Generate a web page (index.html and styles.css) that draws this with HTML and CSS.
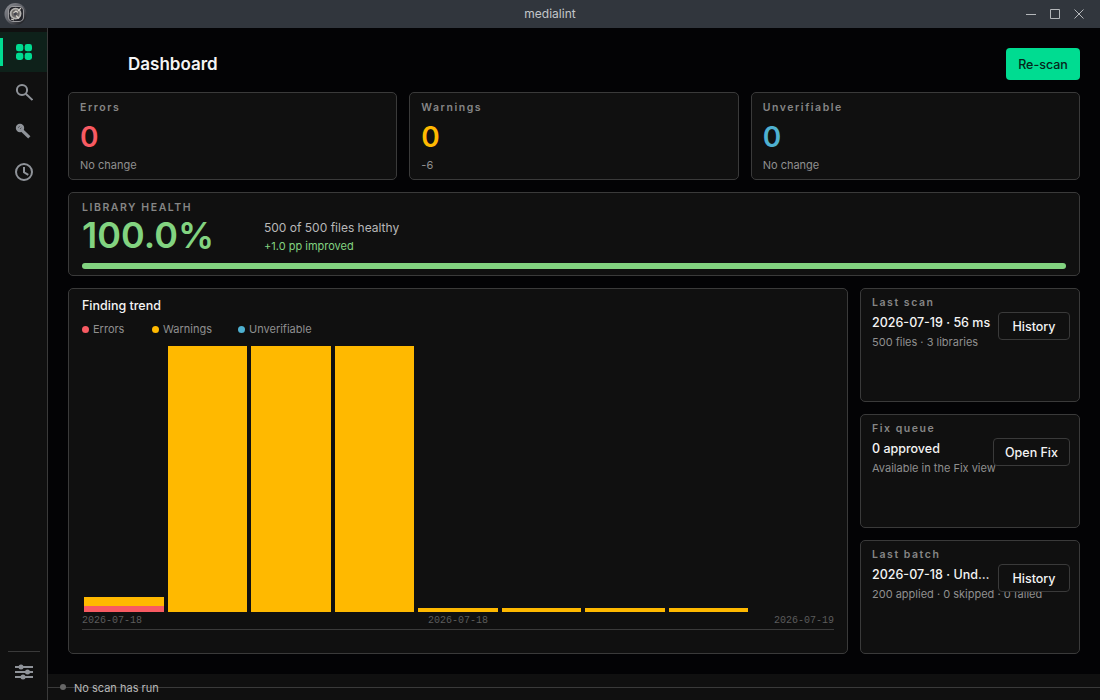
FILE: index.html
```html
<!DOCTYPE html>
<html lang="en">

<head>
    <meta charset="UTF-8">
    <meta name="viewport" content="width=device-width, initial-scale=1.0">
    <title>medialint</title>
    <link rel="stylesheet" href="styles.css">
</head>

<body>
    <!-- Window title bar -->
    <header class="titlebar">
        <svg class="app-icon" width="24" height="24" viewBox="0 0 24 24">
            <defs>
                <linearGradient id="metal" x1="0" y1="0" x2="1" y2="1">
                    <stop offset="0" stop-color="#92949a"/>
                    <stop offset="0.5" stop-color="#5b5d64"/>
                    <stop offset="1" stop-color="#0c0d10"/>
                </linearGradient>
            </defs>
            <circle cx="11.5" cy="12" r="11" fill="url(#metal)"/>
            <rect x="4.5" y="4.5" width="15" height="15" rx="4.5" fill="#222329" stroke="#99999c" stroke-width="1.1"/>
            <circle cx="11.6" cy="11.6" r="5" fill="#6d6a68" stroke="#b5b3b0" stroke-width="1.8"/>
            <path d="M9.5 11l2.5-2 2 1.5M17 6l-3 3M12 13.5l3 3M7 17l3 1" fill="none" stroke="#d6d2cc" stroke-width="1.2"/>
            <circle cx="11.3" cy="12" r="1.5" fill="#43444f"/>
        </svg>
        <span class="window-title">medialint</span>
        <div class="window-buttons">
            <svg width="12" height="12" viewBox="0 0 12 12"><path d="M1 6.5h10"/></svg>
            <svg width="12" height="12" viewBox="0 0 12 12"><path d="M1.5 1.5h9v9h-9z"/></svg>
            <svg width="12" height="12" viewBox="0 0 12 12"><path d="M1.5 1.5l9 9M10.5 1.5l-9 9"/></svg>
        </div>
    </header>

    <div class="window">
        <!-- Navigation -->
        <nav class="sidebar">
            <a class="nav-item active">
                <svg width="18" height="18" viewBox="0 0 18 18" fill="currentColor">
                    <rect x="1" y="1" width="7.3" height="7.3" rx="2.4"/>
                    <rect x="9.7" y="1" width="7.3" height="7.3" rx="2.4"/>
                    <rect x="1" y="9.7" width="7.3" height="7.3" rx="2.4"/>
                    <rect x="9.7" y="9.7" width="7.3" height="7.3" rx="2.4"/>
                </svg>
            </a>
            <a class="nav-item">
                <svg width="18" height="18" viewBox="0 0 18 18" fill="none" stroke="currentColor" stroke-width="2">
                    <circle cx="7" cy="7" r="5.1"/>
                    <path d="M10.8 10.8l6.7 6.3"/>
                </svg>
            </a>
            <a class="nav-item">
                <svg width="18" height="18" viewBox="0 0 18 18" fill="none">
                    <circle cx="5" cy="5" r="4.2" fill="currentColor"/>
                    <path d="M6.5 6.8l7.8 7.6" stroke="currentColor" stroke-width="3.2"/>
                    <path d="M3 4.8l1.8-1.6M5 6l1.4-1.3" stroke="#4c4f54" stroke-width="0.9"/>
                </svg>
            </a>
            <a class="nav-item">
                <svg width="18" height="18" viewBox="0 0 18 18" fill="none" stroke="currentColor" stroke-width="2">
                    <circle cx="9" cy="9" r="8"/>
                    <path d="M9 4v5.3l4.3 2.6"/>
                </svg>
            </a>
            <a class="nav-item settings">
                <svg width="18" height="18" viewBox="0 0 18 18" fill="currentColor">
                    <path d="M0 3h18v2H0zM0 8h18v2H0zM0 13h18v2H0z"/>
                    <circle cx="6" cy="4" r="2.5"/>
                    <circle cx="12.5" cy="9" r="2.5"/>
                    <circle cx="8" cy="14" r="2.5"/>
                </svg>
            </a>
        </nav>

        <div class="content">
            <main class="dashboard">
                <div class="page-header">
                    <h1>Dashboard</h1>
                    <button class="primary">Re-scan</button>
                </div>

                <!-- Counters -->
                <div class="stats">
                    <div class="card stat">
                        <div class="label">Errors</div>
                        <div class="value errors">0</div>
                        <div class="note">No change</div>
                    </div>
                    <div class="card stat">
                        <div class="label">Warnings</div>
                        <div class="value warnings">0</div>
                        <div class="note">-6</div>
                    </div>
                    <div class="card stat">
                        <div class="label">Unverifiable</div>
                        <div class="value unverifiable">0</div>
                        <div class="note">No change</div>
                    </div>
                </div>

                <!-- Library health -->
                <div class="card health">
                    <div class="label">LIBRARY HEALTH</div>
                    <div class="health-row">
                        <div class="percent">100.0%</div>
                        <div class="health-text">
                            <div class="files">500 of 500 files healthy</div>
                            <div class="improved">+1.0 pp improved</div>
                        </div>
                    </div>
                    <div class="progress"></div>
                </div>

                <div class="bottom">
                    <!-- Trend chart -->
                    <div class="card trend">
                        <h2>Finding trend</h2>
                        <div class="legend">
                            <span class="errors">Errors</span>
                            <span class="warnings">Warnings</span>
                            <span class="unverifiable">Unverifiable</span>
                        </div>
                        <div class="chart">
                            <div class="bar"><i class="warn" style="height: 9px"></i><i class="err" style="height: 6px"></i></div>
                            <div class="bar"><i class="warn" style="height: 266px"></i></div>
                            <div class="bar"><i class="warn" style="height: 266px"></i></div>
                            <div class="bar"><i class="warn" style="height: 266px"></i></div>
                            <div class="bar"><i class="warn" style="height: 4px"></i></div>
                            <div class="bar"><i class="warn" style="height: 4px"></i></div>
                            <div class="bar"><i class="warn" style="height: 4px"></i></div>
                            <div class="bar"><i class="warn" style="height: 4px"></i></div>
                            <div class="bar"></div>
                        </div>
                        <div class="axis">
                            <span>2026-07-18</span>
                            <span>2026-07-18</span>
                            <span>2026-07-19</span>
                        </div>
                    </div>

                    <div class="side">
                        <div class="card info">
                            <div class="label">Last scan</div>
                            <div class="title">2026-07-19 · 56 ms</div>
                            <div class="note">500 files · 3 libraries</div>
                            <button>History</button>
                        </div>
                        <div class="card info">
                            <div class="label">Fix queue</div>
                            <div class="title">0 approved</div>
                            <div class="note">Available in the Fix view</div>
                            <button>Open Fix</button>
                        </div>
                        <div class="card info">
                            <div class="label">Last batch</div>
                            <div class="title">2026-07-18 · Und…</div>
                            <div class="note">200 applied · 0 skipped · 0 failed</div>
                            <button>History</button>
                        </div>
                    </div>
                </div>
            </main>

            <footer class="statusbar">
                <span class="dot"></span>
                <span>No scan has run</span>
            </footer>
        </div>
    </div>
</body>

</html>
```

FILE: styles.css
```css
* {
    box-sizing: border-box;
}

body {
    margin: 0;
    height: 700px;
    display: flex;
    flex-direction: column;
    overflow: hidden;
    background-color: #030305;
    color: #f4f4f4;
    font-family: Inter, sans-serif;
    font-size: 12.5px;
}

h1,
h2 {
    margin: 0;
}

/* Title bar */
.titlebar {
    height: 28px;
    display: grid;
    grid-template-columns: 1fr auto 1fr;
    align-items: center;
    padding: 0 15px 0 4px;
    background-color: #31363d;
}

.app-icon {
    margin-top: -1px;
}

.window-title {
    font-size: 12px;
    line-height: 16px;
    color: #c3c6c9;
    padding-left: 11px;
}

.window-buttons {
    display: flex;
    justify-content: flex-end;
    gap: 12px;
}

.window-buttons svg {
    fill: none;
    stroke: #b4b7ba;
    stroke-width: 1;
}

.window {
    flex: 1;
    display: flex;
    min-height: 0;
}

/* Sidebar */
.sidebar {
    width: 48px;
    display: flex;
    flex-direction: column;
    padding: 4px 0 8px;
    background-color: #101010;
    border-right: 1px solid #3a3a3a;
}

.nav-item {
    height: 40px;
    display: flex;
    align-items: center;
    justify-content: center;
    padding-left: 1px;
    color: #8f9399;
}

.nav-item.active {
    color: #00dc91;
    background: linear-gradient(#00dc91, #00dc91) 0 50% / 3px 28px no-repeat #0e211a;
}

.nav-item.settings {
    height: 41px;
    margin: auto 7px 0 8px;
    border-top: 1px solid #3a3a3a;
    padding: 0;
}

.content {
    flex: 1;
    display: flex;
    flex-direction: column;
    min-width: 0;
}

.dashboard {
    flex: 1;
    display: flex;
    flex-direction: column;
    gap: 12px;
    padding: 20px;
    min-height: 0;
}

.page-header {
    height: 32px;
    display: flex;
    align-items: center;
    justify-content: space-between;
    padding-left: 60px;
}

h1 {
    font-size: 17px;
    font-weight: 600;
}

button {
    min-width: 72px;
    height: 28px;
    padding: 1px 11px 0;
    border: 1px solid #3a3a3a;
    border-radius: 4px;
    background-color: #101010;
    color: #f4f4f4;
    font-family: inherit;
    font-size: 12.5px;
    font-weight: 500;
}

button.primary {
    width: 74px;
    height: 32px;
    padding: 1px 0 0;
    border: none;
    background-color: #00dc91;
    color: #06251a;
}

/* Cards */
.card {
    background-color: #101010;
    border: 1px solid #3a3a3a;
    border-radius: 5px;
}

.label {
    height: 14px;
    font-size: 10.5px;
    line-height: 16px;
    font-weight: 600;
    letter-spacing: 1.55px;
    color: #868686;
}

.note {
    font-size: 11px;
    line-height: 14px;
    color: #8f8f8f;
}

.errors {
    color: #f85a62;
}

.warnings {
    color: #ffb900;
}

.unverifiable {
    color: #4eb0d0;
}

.stats {
    display: grid;
    grid-template-columns: repeat(3, 1fr);
    gap: 12px;
}

.stat {
    height: 88px;
    padding: 7px 11px;
}

.value {
    font-size: 28px;
    font-weight: 600;
    line-height: 34px;
    margin: 6px 0 4px;
}

/* Library health */
.health {
    height: 84px;
    padding: 7px 13px;
}

.health-row {
    height: 42px;
    display: flex;
}

.percent {
    width: 182px;
    font-size: 36px;
    font-weight: 600;
    line-height: 42px;
    color: #82d380;
}

.files {
    font-size: 12px;
    line-height: 16px;
    margin-top: 6px;
    color: #b8b8b8;
}

.improved {
    font-size: 11px;
    line-height: 14px;
    margin-top: 3px;
    color: #82d380;
}

.progress {
    height: 6px;
    margin-top: 7px;
    border-radius: 3px;
    background-color: #82d380;
}

.bottom {
    flex: 1;
    display: grid;
    grid-template-columns: 1fr 220px;
    gap: 12px;
}

/* Trend chart */
.trend {
    padding: 8px 13px;
}

h2 {
    font-size: 12.5px;
    font-weight: 500;
    line-height: 18px;
}

.legend {
    display: flex;
    gap: 26px;
    margin-top: 7px;
    font-size: 11px;
    line-height: 14px;
}

.legend span {
    display: flex;
    align-items: center;
    gap: 4px;
}

.legend .errors {
    min-width: 44px;
}

.legend span::before {
    content: "";
    width: 7px;
    height: 7px;
    border-radius: 50%;
    background-color: currentColor;
}

.legend span {
    -webkit-text-fill-color: #8f8f8f;
}

.chart {
    height: 266px;
    margin-top: 10px;
    display: grid;
    grid-template-columns: repeat(9, 1fr);
}

.bar {
    display: flex;
    flex-direction: column;
    justify-content: flex-end;
    padding: 0 2px;
}

.warn {
    background-color: #ffb900;
}

.err {
    background-color: #f85a62;
}

.axis {
    height: 18px;
    display: flex;
    justify-content: space-between;
    padding-top: 3px;
    border-bottom: 1px solid #3a3a3a;
    font-family: "Liberation Mono", monospace;
    font-size: 10px;
    line-height: 12px;
    color: #5c5c5c;
}

/* Side cards */
.side {
    display: grid;
    grid-template-rows: repeat(3, 1fr);
    gap: 12px;
}

.info {
    position: relative;
    padding: 6px 11px;
}

.info .title {
    font-weight: 500;
    line-height: 18px;
    margin: 5px 0 3px;
    white-space: nowrap;
}

/* The button sits on top of the note when the text is long */
.info button {
    position: absolute;
    top: 23px;
    right: 9px;
}

/* Status bar */
.statusbar {
    height: 26px;
    display: flex;
    align-items: center;
    gap: 8px;
    padding: 2px 12px 0;
    background: linear-gradient(#3a3a3a, #3a3a3a) 0 13px / 100% 1px no-repeat #101010;
    font-size: 11px;
    color: #b8b8b8;
}

.dot {
    width: 6px;
    height: 6px;
    margin-top: -2px;
    border-radius: 50%;
    background-color: #666;
}
```
